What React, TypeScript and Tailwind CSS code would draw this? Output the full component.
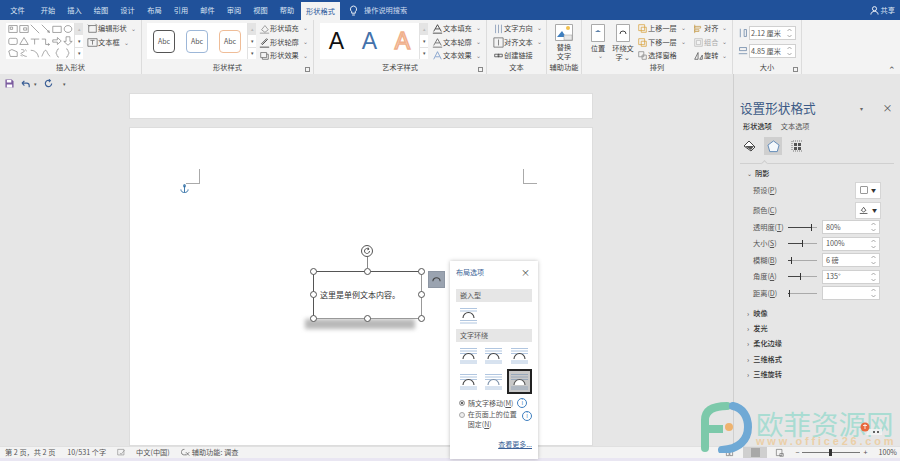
import type { ReactNode } from "react"

const tabs = [
  { label: "文件", w: "w-[35px]" },
  { label: "开始", w: "w-[26px]" },
  { label: "插入", w: "w-[27px]" },
  { label: "绘图", w: "w-[26px]" },
  { label: "设计", w: "w-[27px]" },
  { label: "布局", w: "w-[27px]" },
  { label: "引用", w: "w-[26px]" },
  { label: "邮件", w: "w-[27px]" },
  { label: "审阅", w: "w-[26px]" },
  { label: "视图", w: "w-[27px]" },
  { label: "帮助", w: "w-[26px]" },
]

const shapePaths = [
  "M1 2h11v9H1z M3 4h3v3H3z",
  "M1 2h11v9H1z M6 5h4v3H6z",
  "M1 1L12 12",
  "M1 1L11 11 M11 11l-3-1 M11 11l-1-3",
  "M1 3h11v8H1z",
  "M6.5 2a5 4.5 0 1 0 .01 0z",
  "M3 3h7a2 2 0 0 1 2 2v4a2 2 0 0 1-2 2H3a2 2 0 0 1-2-2V5a2 2 0 0 1 2-2z",
  "M6.5 2L12 11H1z",
  "M1 4h5v7 M6 4h6",
  "M1 4h5v7h5 M11 11l-2-1.500 M11 11l-2 1.500",
  "M1 5h6V2l5 4.500L7 11V8H1z",
  "M4 1h5v6h3l-5.500 5L1 7h3z",
  "M1 4l4-2 7 3v6H3z",
  "M3 2c5 0 5 3 1 4s3 5 6 5 M8 2l2 2 M2 9l2 2",
  "M1 3c5 0 9 3 10 9",
  "M1 11c2-4 3-8 5-8s2 5 6 8",
  "M9 1C6 1 7 5 5 6.500 7 8 6 12 9 12",
  "M4 1c3 0 2 4 4 5.500C6 8 7 12 4 12",
]

function Icon({ d, className, color = "#666" }: { d: string; className?: string; color?: string }) {
  return (
    <svg viewBox="0 0 13 13" className={className ?? "w-[11px] h-[11px] shrink-0"} fill="none" stroke={color} strokeWidth="0.9">
      <path d={d} />
    </svg>
  )
}

function Caret() {
  return <span className="ml-[4px] text-[6px] leading-none text-[#777]">⌄</span>
}

function GalleryScroll() {
  return (
    <div className="w-[9px] flex flex-col border-l border-[#e2e2e2] text-[5px] text-[#555] text-center shrink-0">
      <div className="h-[12px] bg-[#e4e4e4] text-[#bbb] leading-[12px]">▴</div>
      <div className="h-[12px] bg-white leading-[12px]">▾</div>
      <div className="flex-1 bg-white leading-[10px] border-t border-[#e2e2e2]">▾</div>
    </div>
  )
}

function CmdRow({ icon, label, caret = true, muted = false }: { icon: ReactNode; label: string; caret?: boolean; muted?: boolean }) {
  return (
    <div className={`h-[13px] flex items-center whitespace-nowrap ${muted ? "text-[#aaa]" : "text-[#444]"}`}>
      <span className="w-[11px] h-[11px] flex items-center justify-center shrink-0">{icon}</span>
      <span>{label}</span>
      {caret && <Caret />}
    </div>
  )
}

function Group({ w, label, launcher, children }: { w: string; label: string; launcher?: boolean; children: ReactNode }) {
  return (
    <div className={`${w} relative shrink-0 h-full flex flex-col border-r border-[#dcdcdc]`}>
      <div className="flex-1 flex min-h-0 pt-[3px]">{children}</div>
      <div className="h-[12px] text-center leading-[10px] text-[#444]">{label}</div>
      {launcher && <span className="absolute right-[3px] bottom-[2px] w-[5px] h-[5px] border border-[#888]" />}
    </div>
  )
}

function FontA({ color, outline }: { color: string; outline?: boolean }) {
  return (
    <span
      className={`w-[33px] text-center text-[23px] leading-none font-['Liberation_Sans',sans-serif] ${outline ? "[-webkit-text-stroke:1.500px_#f0b08c]" : ""}`}
      style={{ color }}
    >
      A
    </span>
  )
}

function SpinInput({ value, w = "w-[47px]", pad = "pl-[1px]" }: { value: string; w?: string; pad?: string }) {
  return (
    <div className={`${w} ${pad} h-[14px] bg-white border border-[#d0d0d0] flex items-center justify-between pr-[3px] text-[#555]`}>
      <span>{value}</span>
      <svg viewBox="0 0 5 10" className="w-[5px] h-[10px]" fill="none" stroke="#888" strokeWidth="0.7">
        <path d="M.5 3l2-2 2 2 M.5 7l2 2 2-2" />
      </svg>
    </div>
  )
}

function Ribbon() {
  return (
    <div className="h-[54px] bg-[#f3f3f3] flex text-[7.200px] relative">
      <Group w="w-[142px]" label="插入形状">
        <div className="ml-[6px] w-[77px] h-[36px] bg-white flex">
          <div className="flex-1 grid grid-cols-6 grid-rows-3 items-center justify-items-center pl-[1px]">
            {shapePaths.map((d) => (
              <Icon key={d} d={d} className="w-[10px] h-[10px]" color="#808080" />
            ))}
          </div>
          <GalleryScroll />
        </div>
        <div className="ml-[4px] -mt-[1px] flex flex-col gap-[1px]">
          <CmdRow icon={<Icon d="M2 3h9v8H2z M1 2l2 2 M10 1l2 2" />} label="编辑形状" />
          <CmdRow icon={<Icon d="M1 2h11v9H1z M4 4h5 M6.500 4v5" />} label="文本框" />
        </div>
      </Group>
      <Group w="w-[172px]" label="形状样式" launcher>
        <div className="ml-[5px] w-[109px] h-[36px] bg-white flex">
          <div className="flex-1 flex items-center gap-[11px] pl-[6px] text-[7px] text-[#555]">
            <span className="w-[22px] h-[23px] rounded-[4px] border border-[#555] flex items-center justify-center">Abc</span>
            <span className="w-[22px] h-[23px] rounded-[4px] border border-[#9db7d8] flex items-center justify-center">Abc</span>
            <span className="w-[22px] h-[23px] rounded-[4px] border border-[#efbd98] flex items-center justify-center">Abc</span>
          </div>
          <GalleryScroll />
        </div>
        <div className="ml-[3px] -mt-[1px] flex flex-col gap-[1px]">
          <CmdRow icon={<Icon d="M3 8l4-5 4 5-4 3z M1 12h11" color="#888" />} label="形状填充" />
          <CmdRow icon={<Icon d="M3 8l6-6 1 1-6 6z M1 12h11" color="#222" />} label="形状轮廓" />
          <CmdRow icon={<Icon d="M2 3h7v6H2z M9 5h2v6H4V9" />} label="形状效果" />
        </div>
      </Group>
      <Group w="w-[173px]" label="艺术字样式" launcher>
        <div className="ml-[6px] w-[108px] h-[36px] bg-white flex">
          <div className="flex-1 flex items-center justify-center">
            <FontA color="#111" />
            <FontA color="#4472ab" />
            <FontA color="#fbe3d4" outline />
          </div>
          <GalleryScroll />
        </div>
        <div className="ml-[4px] -mt-[1px] flex flex-col gap-[1px]">
          <CmdRow icon={<Icon d="M2 10L6.500 2 11 10 M4 7h5 M1 12h11" color="#222" />} label="文本填充" />
          <CmdRow icon={<Icon d="M2 10L6.500 2 11 10 M4 7h5 M1 12h11" color="#555" />} label="文本轮廓" />
          <CmdRow icon={<Icon d="M2 11L6.500 2 11 11 M4 8h5" color="#6f93c6" />} label="文本效果" />
        </div>
      </Group>
      <Group w="w-[60px]" label="文本">
        <div className="ml-[6px] -mt-[1px] flex flex-col gap-[1px]">
          <CmdRow icon={<Icon d="M3 2v10 M6.500 2v10 M10 2v10" color="#7d93b3" />} label="文字方向" />
          <CmdRow icon={<Icon d="M1 1h11v11H1z M6.500 3v7" />} label="对齐文本" />
          <CmdRow caret={false} icon={<Icon d="M2 5h5v3H2z M6 5h5v3H6z" color="#444" />} label="创建链接" />
        </div>
      </Group>
      <Group w="w-[35px]" label="辅助功能">
        <div className="w-full flex flex-col items-center text-[#444] leading-[9px] pt-[1px]">
          <svg viewBox="0 0 18 17" className="w-[18px] h-[17px] mb-[2px]">
            <path d="M.5.5h17v16H.5z" fill="#fff" stroke="#aaa" />
            <circle cx="13" cy="4" r="2" fill="#f2c14e" />
            <path d="M2 13l5-6 4 6z" fill="#3f7fbf" />
            <path d="M9 11h8v5H9z" fill="#e8e8e8" stroke="#999" strokeWidth=".5" />
          </svg>
          <span>替换</span>
          <span>文字</span>
        </div>
      </Group>
      <Group w="w-[151px]" label="排列">
        <div className="w-[28px] ml-[2px] flex flex-col items-center text-[#444] leading-[9px] pt-[1px]">
          <svg viewBox="0 0 14 18" className="w-[14px] h-[18px] mb-[2px]">
            <path d="M.5.5h13v17H.5z" fill="#fff" stroke="#aaa" />
            <path d="M4 8l3-2 3 2z" fill="#5b7fa8" />
          </svg>
          <span>位置</span>
          <Caret />
        </div>
        <div className="w-[22px] flex flex-col items-center text-[#444] leading-[9px] pt-[1px]">
          <svg viewBox="0 0 14 18" className="w-[14px] h-[18px] mb-[2px]">
            <path d="M.5.5h13v17H.5z" fill="#fff" stroke="#aaa" />
            <path d="M4 10a3 3 0 0 1 6 0" fill="none" stroke="#444" />
          </svg>
          <span className="whitespace-nowrap">环绕文</span>
          <span>字 ⌄</span>
        </div>
        <div className="ml-[3px] -mt-[1px] w-[56px] flex flex-col gap-[1px]">
          <CmdRow icon={<Icon d="M2 2h7v7H2z M5 5h6v6H5z" color="#d9a441" />} label="上移一层" />
          <CmdRow icon={<Icon d="M2 2h7v7H2z M5 5h6v6H5z" color="#d9a441" />} label="下移一层" />
          <CmdRow caret={false} icon={<Icon d="M2 2h6v6H2z M6 6h5v5H6z" color="#888" />} label="选择窗格" />
        </div>
        <div className="-mt-[1px] flex flex-col gap-[1px]">
          <CmdRow icon={<Icon d="M2 2v10 M2 4h7v2H2z M2 8h5v2H2z" color="#c59a4a" />} label="对齐" />
          <CmdRow muted icon={<Icon d="M2 2h9v9H2z M4 4h5v5H4z" color="#bbb" />} label="组合" />
          <CmdRow icon={<Icon d="M2 11l4-8v8z M8 11l3-5v5z" color="#555" />} label="旋转" />
        </div>
      </Group>
      <Group w="w-[69px]" label="大小" launcher>
        <div className="pl-[5px] flex flex-col gap-[4px] pt-[3px]">
          <div className="flex items-center gap-[1px]">
            <Icon d="M3 1v11 M8 2h3v9H8z" className="w-[10px] h-[12px] shrink-0" color="#5c7a9e" />
            <SpinInput value="2.12 厘米" />
          </div>
          <div className="flex items-center gap-[1px]">
            <Icon d="M2 2h9v4H2z M1 10h11" className="w-[10px] h-[12px] shrink-0" color="#5c7a9e" />
            <SpinInput value="4.85 厘米" />
          </div>
        </div>
      </Group>
      <span className="absolute right-[4px] bottom-[0px] text-[#555] text-[9px] leading-none">⌃</span>
    </div>
  )
}

function PanelLabel({ text, hotkey }: { text: string; hotkey: string }) {
  return (
    <span className="w-[35px] text-[#555] shrink-0 whitespace-nowrap">
      {text}(<span className="underline">{hotkey}</span>)
    </span>
  )
}

const sliders = [
  { text: "透明度", hotkey: "T", value: "80%", pos: 23 },
  { text: "大小", hotkey: "S", value: "100%", pos: 14 },
  { text: "模糊", hotkey: "B", value: "6 磅", pos: 3 },
  { text: "角度", hotkey: "A", value: "135°", pos: 12 },
  { text: "距离", hotkey: "D", value: "", pos: 1 },
]

function Panel() {
  return (
    <div className="w-[167px] shrink-0 bg-[#e6e6e6] border-l border-[#cfcfcf] flex flex-col text-[7.200px] pt-[25px] pl-[6px]">
      <div className="flex items-center h-[18px]">
        <span className="text-[12.600px] text-[#3c5a85] leading-none">设置形状格式</span>
        <span className="ml-[44px] text-[6px] text-[#666]">▾</span>
        <span className="ml-[20px] text-[10px] text-[#555] leading-none">×</span>
      </div>
      <div className="flex gap-[9px] mt-[4px] pl-[3px] h-[10px] items-center">
        <span className="text-[#333] font-medium">形状选项</span>
        <span className="text-[#555]">文本选项</span>
      </div>
      <div className="flex items-center mt-[6px] pl-[1px] h-[18px] gap-[7px]">
        <svg viewBox="0 0 14 14" className="w-[14px] h-[14px] ml-[2px]">
          <path d="M1 7l5-5 6 6-4 4z" fill="#fff" stroke="#444" />
          <path d="M2 7h9l-3 4z" fill="#555" />
        </svg>
        <div className="w-[18px] h-[18px] bg-[#cfcfcf] flex items-center justify-center">
          <svg viewBox="0 0 14 14" className="w-[13px] h-[13px]">
            <path d="M7 1l6 4.500-2 7H3l-2-7z" fill="#f4f8fc" stroke="#5d87b5" />
          </svg>
        </div>
        <svg viewBox="0 0 14 14" className="w-[14px] h-[14px]">
          <path d="M3 2v10" stroke="#777" strokeDasharray="1 1" />
          <path d="M4 2h9 M4 12h9" stroke="#777" strokeDasharray="1 1" />
          <path d="M5 4h3v3H5z M9 4h3v3H9z M5 8h3v3H5z M9 8h3v3H9z" fill="#555" />
        </svg>
      </div>
      <div className="relative mt-[8px] mr-[6px] border-t border-[#d0d0d0]">
        <span className="absolute left-[22px] -top-[3px] w-[5px] h-[5px] rotate-45 bg-[#e6e6e6] border-l border-t border-[#d0d0d0]" />
      </div>
      <div className="flex items-center h-[10px] mt-[4px] gap-[3px] pl-[7px] text-[#333] font-medium">
        <span className="text-[6px] text-[#555]">⌄</span>
        阴影
      </div>
      <div className="flex items-center h-[18px] mt-[3px] pl-[13px]">
        <PanelLabel text="预设" hotkey="P" />
        <div className="ml-[67px] w-[26px] h-[17px] bg-white border border-[#d5d5d5] flex items-center justify-center gap-[3px]">
          <span className="w-[8px] h-[8px] border border-[#999] rounded-[1px]" />
          <span className="text-[5px] text-[#333]">▼</span>
        </div>
      </div>
      <div className="flex items-center h-[18px] mt-[2px] pl-[13px]">
        <PanelLabel text="颜色" hotkey="C" />
        <div className="ml-[67px] w-[26px] h-[17px] bg-white border border-[#d5d5d5] flex items-center justify-center gap-[3px]">
          <Icon d="M3 7l3-4 3 4-3 2z M1 11h10" className="w-[10px] h-[10px]" color="#222" />
          <span className="text-[5px] text-[#333]">▼</span>
        </div>
      </div>
      <div className="flex flex-col gap-[2.500px] mt-[1px] pl-[13px]">
        {sliders.map((s) => (
          <div key={s.text} className="flex items-center h-[14px]">
            <PanelLabel text={s.text} hotkey={s.hotkey} />
            <div className="relative w-[29px] h-[7px] flex items-center">
              <div className="w-full h-px bg-[#aaa]" />
              <div className="absolute left-0 h-px bg-[#444]" style={{ width: s.pos }} />
              <div className="absolute w-px h-[7px] bg-[#333]" style={{ left: s.pos }} />
            </div>
            <div className="ml-[5px]">
              <SpinInput value={s.value} w="w-[58px]" pad="pl-[3px]" />
            </div>
          </div>
        ))}
      </div>
      <div className="flex flex-col gap-[5.400px] mt-[8px] pl-[7px]">
        {["映像", "发光", "柔化边缘", "三维格式", "三维旋转"].map((t) => (
          <div key={t} className="flex items-center gap-[4px] h-[10px] text-[#333] font-medium">
            <span className="text-[7px] text-[#555] leading-none">›</span>
            {t}
          </div>
        ))}
      </div>
    </div>
  )
}

function Handle({ className }: { className: string }) {
  return <span className={`absolute w-[7px] h-[7px] rounded-full bg-white border border-[#555] ${className}`} />
}

function WrapIcon({ selected = false, tone = "#9db8d8", arc = "#444" }: { selected?: boolean; tone?: string; arc?: string }) {
  return (
    <span className={`w-[25px] h-[25px] flex items-center justify-center ${selected ? "border-2 border-[#222] bg-[#c8c8c8]" : ""}`}>
      <svg viewBox="0 0 17 17" className="w-[17px] h-[17px]">
        <path d="M0 1.500h17 M0 4h17 M0 6.500h17 M0 14h17 M0 16h17" stroke={tone} strokeWidth=".8" />
        <path d="M3 12a5.500 5.500 0 0 1 11 0z" fill="#fff" stroke="none" />
        <path d="M3 12a5.500 5.500 0 0 1 11 0" fill="none" stroke={arc} strokeWidth="1.100" />
      </svg>
    </span>
  )
}

function InfoDot({ className }: { className: string }) {
  return (
    <span className={`w-[10px] h-[10px] shrink-0 rounded-full border border-[#3f7fbf] text-[#3f7fbf] text-[6px] leading-[8px] text-center ${className}`}>i</span>
  )
}

function LayoutPopup() {
  return (
    <div className="absolute left-[320px] top-[133px] w-[88px] h-[198px] bg-white shadow-[0_0_4px_rgba(0,0,0,0.25)] px-[6px] pt-[6px] text-[7px] text-[#555]">
      <div className="flex justify-between items-center h-[10px] pr-[2px]">
        <span className="text-[#3a5f96]">布局选项</span>
        <span className="text-[9px] leading-none text-[#444]">×</span>
      </div>
      <div className="mt-[12px] h-[13px] bg-[#e6e6e6] pl-[4px] leading-[13px]">嵌入型</div>
      <div className="mt-[5px] h-[18px] pl-[4px]">
        <svg viewBox="0 0 17 17" className="w-[17px] h-[17px]">
          <path d="M0 1.500h17 M0 4h17 M0 13.500h17 M0 16h17" stroke="#9db8d8" strokeWidth=".8" />
          <path d="M3 11a5.500 5.500 0 0 1 11 0" fill="none" stroke="#444" strokeWidth="1.100" />
        </svg>
      </div>
      <div className="mt-[4px] h-[13px] bg-[#e6e6e6] pl-[4px] leading-[13px]">文字环绕</div>
      <div className="mt-[1px] grid grid-cols-3 gap-y-[1px] justify-items-center">
        <WrapIcon />
        <WrapIcon />
        <WrapIcon />
        <WrapIcon />
        <WrapIcon arc="#7a8fa8" />
        <WrapIcon selected tone="#8aa0b8" arc="#555" />
      </div>
      <div className="mt-[3px] flex items-center gap-[3px] h-[12px]">
        <span className="ml-[3px] w-[6px] h-[6px] rounded-full border border-[#aaa] bg-[#333] ring-1 ring-white ring-inset" />
        <span>随文字移动(<span className="underline">M</span>)</span>
        <InfoDot className="ml-[1px]" />
      </div>
      <div className="mt-[1px] flex items-start gap-[3px]">
        <span className="ml-[3px] mt-[2px] w-[6px] h-[6px] rounded-full border border-[#aaa] bg-[#eee]" />
        <div className="w-[53px] leading-[9.500px]">
          <div className="whitespace-nowrap">在页面上的位置</div>
          <div className="whitespace-nowrap">固定(<span className="underline">N</span>)</div>
        </div>
        <InfoDot className="mt-[1px]" />
      </div>
      <div className="absolute right-[6px] bottom-[10px] text-[#3a5f96] underline">查看更多...</div>
    </div>
  )
}

function Document() {
  return (
    <div className="flex-1 min-w-0 flex flex-col bg-[#e6e6e6]">
      <div className="h-[19px] flex items-center pl-[5px] gap-[7px] text-[8px] text-[#555]">
        <svg viewBox="0 0 10 10" className="w-[9px] h-[9px]">
          <path d="M.5.5h7l2 2v7H.5z" fill="#7a5a9e" />
          <path d="M2 1h5v3H2z M2 6h6v3.500H2z" fill="#fff" />
        </svg>
        <span className="flex items-center gap-[3px]">
          <svg viewBox="0 0 12 10" className="w-[10px] h-[8px]">
            <path d="M1 4h6a3 3 0 0 1 3 3v2 M1 4l3-3 M1 4l3 3" fill="none" stroke="#3b5f96" strokeWidth="1.500" />
          </svg>
          <span className="text-[5px]">▾</span>
        </span>
        <svg viewBox="0 0 10 10" className="w-[9px] h-[9px]">
          <path d="M8.500 5a3.500 3.500 0 1 1-2-3.200 M5.500.5l1.500 1.300-1.500 1.500" fill="none" stroke="#3b5f96" strokeWidth="1.300" />
        </svg>
        <span className="ml-[3px] text-[5px]">▾</span>
      </div>
      <div className="relative flex-1 min-h-0 pl-[129px]">
        <div className="w-[464px] h-[26px] bg-white border border-[#ddd]" />
        <div className="relative mt-[8px] w-[464px] h-[319px] bg-white border border-[#ddd]">
          <span className="absolute left-[56px] top-[41px] w-[14px] h-[15px] border-r border-b border-[#aaa]" />
          <span className="absolute left-[393px] top-[41px] w-[14px] h-[15px] border-l border-b border-[#aaa]" />
          <svg viewBox="0 0 10 10" className="absolute left-[50px] top-[56px] w-[9px] h-[9px]">
            <path d="M5 1.500v8 M1 6c0 2.500 2 3.500 4 3.500S9 8.500 9 6 M3.500 3h3" fill="none" stroke="#2e6da4" />
            <circle cx="5" cy="1.500" r="1" fill="none" stroke="#2e6da4" />
          </svg>
          <div className="absolute left-[175px] top-[191px] w-[110px] h-[10px] bg-[#b8b8b8] blur-[2px]" />
          <div className="absolute left-[183px] top-[143px] w-[109px] h-[48px] border border-t-[#555] border-l-[#555] border-r-[#999] border-b-[#999] flex items-center pl-[6px] text-[8px] text-[#333] bg-white">
            这里是单例文本内容。
            <Handle className="-left-[4px] -top-[4px]" />
            <Handle className="left-[50px] -top-[4px]" />
            <Handle className="-right-[4px] -top-[4px]" />
            <Handle className="-left-[4px] top-[19px]" />
            <Handle className="-right-[4px] top-[19px]" />
            <Handle className="-left-[4px] -bottom-[4px]" />
            <Handle className="left-[50px] -bottom-[4px]" />
            <Handle className="-right-[4px] -bottom-[4px]" />
            <span className="absolute left-[53px] -top-[15px] w-px h-[12px] bg-[#888]" />
            <svg viewBox="0 0 14 14" className="absolute left-[46px] -top-[28px] w-[14px] h-[14px]">
              <circle cx="7" cy="7" r="5.500" fill="#fff" stroke="#555" />
              <path d="M9.500 7a2.500 2.500 0 1 1-1-2 M8 3.500l1 1.700-1.700.6" fill="none" stroke="#555" />
            </svg>
          </div>
          <div className="absolute left-[298px] top-[143px] w-[17px] h-[17px] bg-[#9aa3b0] flex items-center justify-center border border-[#8d96a3]">
            <svg viewBox="0 0 10 10" className="w-[9px] h-[9px]">
              <path d="M1 7a4 4 0 0 1 8 0" fill="none" stroke="#444" strokeWidth="1.200" />
            </svg>
          </div>
          <LayoutPopup />
        </div>
      </div>
    </div>
  )
}

function StatusBar() {
  return (
    <div className="h-[15px] box-border bg-[#f3f3f3] border-t border-[#e0e0e0] border-b-[3px] border-b-[#e9e6f2] flex items-center pl-[5px] text-[7.200px] text-[#555] whitespace-nowrap">
      <span>第 2 页，共 2 页</span>
      <span className="ml-[12px]">10/531 个字</span>
      <Icon d="M1 2h9v8H1z M4 7l2 2 5-6" className="ml-[11px] w-[9px] h-[9px]" color="#888" />
      <span className="ml-[10px]">中文(中国)</span>
      <Icon d="M5 2a4 4 0 1 0 2 7 M7 6l5 5 M12 6l-5 5" className="ml-[11px] w-[9px] h-[9px]" color="#444" />
      <span className="ml-[2px]">辅助功能: 调查</span>
      <div className="ml-auto flex items-center h-full pr-[3px]">
        <Icon d="M2 2h4v9H2z M7 2h4v9H7z" className="w-[9px] h-[9px] mr-[9px]" color="#666" />
        <span className="w-[24px] h-full bg-[#cfcfcf] flex items-center justify-center">
          <span className="w-[9px] h-[9px] bg-[#a8a8a8]" />
        </span>
        <Icon d="M2 2h8v9H2z M7 8h5v4H7z" className="w-[9px] h-[9px] ml-[8px] mr-[11px]" color="#666" />
        <span>−</span>
        <div className="relative w-[58px] h-px bg-[#777] mx-[3px]">
          <span className="absolute left-[27px] -top-[3px] w-[3px] h-[7px] bg-[#333]" />
        </div>
        <span>+</span>
        <span className="ml-[11px]">100%</span>
      </div>
    </div>
  )
}

function Watermark() {
  return (
    <div className="absolute left-[700px] top-[401px] flex items-start pointer-events-none">
      <svg viewBox="0 0 52 52" className="w-[52px] h-[52px]">
        <path d="M5 47V19C5 10 12 5 27 5" fill="none" stroke="#7cc9aa" strokeWidth="8" strokeLinecap="round" />
        <path d="M5 28h18" fill="none" stroke="#7cc9aa" strokeWidth="8" />
        <path d="M33 5c10 2 15 11 15 21 0 13-9 22-26 23" fill="none" stroke="#6fa9d5" strokeWidth="8" strokeLinecap="round" />
        <circle cx="29" cy="26" r="4" fill="#eeb36f" />
      </svg>
      <div className="ml-[4px] flex flex-col items-start">
        <span className="mt-[8px] text-[27.500px] leading-[28px] text-[#a9dcd2] font-['Noto_Sans_CJK_SC',sans-serif] whitespace-nowrap">欧菲资源网</span>
        <span className="text-[11px] leading-[9px] font-bold tracking-[2.800px] text-[#ebcfa8] font-['Liberation_Sans',sans-serif] whitespace-nowrap">www.office26.com</span>
      </div>
      <svg viewBox="0 0 24 14" className="absolute left-[160px] top-[20px] w-[24px] h-[14px]">
        <path d="M9 8h13v6H6z" fill="#f4f4f4" fillOpacity=".85" />
        <circle cx="5" cy="6" r="4.500" fill="#e8693c" />
        <path d="M3 4.500h4M5 3v5" stroke="#fff" strokeWidth=".8" />
        <circle cx="14" cy="11" r="1" fill="#333" />
        <circle cx="18" cy="11" r="1" fill="#333" />
      </svg>
    </div>
  )
}

export default function App() {
  return (
    <div className="relative w-[900px] h-[461px] overflow-hidden flex flex-col bg-[#e6e6e6] font-['Noto_Sans_CJK_SC','Liberation_Sans',sans-serif]">
      <div className="h-[20px] bg-[#20519a] flex items-end text-[7.200px] text-[#dbe5f3] shrink-0">
        {tabs.map((t) => (
          <span key={t.label} className={`${t.w} h-[20px] leading-[20px] text-center`}>
            {t.label}
          </span>
        ))}
        <span className="w-[39px] h-[18px] leading-[18px] ml-[1px] bg-[#f3f3f3] text-center text-[#2b579a]">形状格式</span>
        <svg viewBox="0 0 10 12" className="ml-[9px] mb-[4px] w-[9px] h-[11px]">
          <path d="M5 1a3.500 3.500 0 0 0-2 6.300V9h4V7.300A3.500 3.500 0 0 0 5 1z M3.500 11h3" fill="none" stroke="#fff" />
        </svg>
        <span className="ml-[6px] h-[20px] leading-[20px] text-[#cfdcee]">操作说明搜索</span>
        <span className="ml-auto mr-[5px] h-[20px] flex items-center gap-[2px]">
          <svg viewBox="0 0 10 10" className="w-[9px] h-[9px]">
            <circle cx="5" cy="3" r="2.300" fill="none" stroke="#fff" />
            <path d="M1 9.500c0-2.500 2-3.500 4-3.500s4 1 4 3.500" fill="none" stroke="#fff" />
          </svg>
          共享
        </span>
      </div>
      <Ribbon />
      <div className="flex-1 min-h-0 flex">
        <Document />
        <Panel />
      </div>
      <StatusBar />
      <Watermark />
    </div>
  )
}
